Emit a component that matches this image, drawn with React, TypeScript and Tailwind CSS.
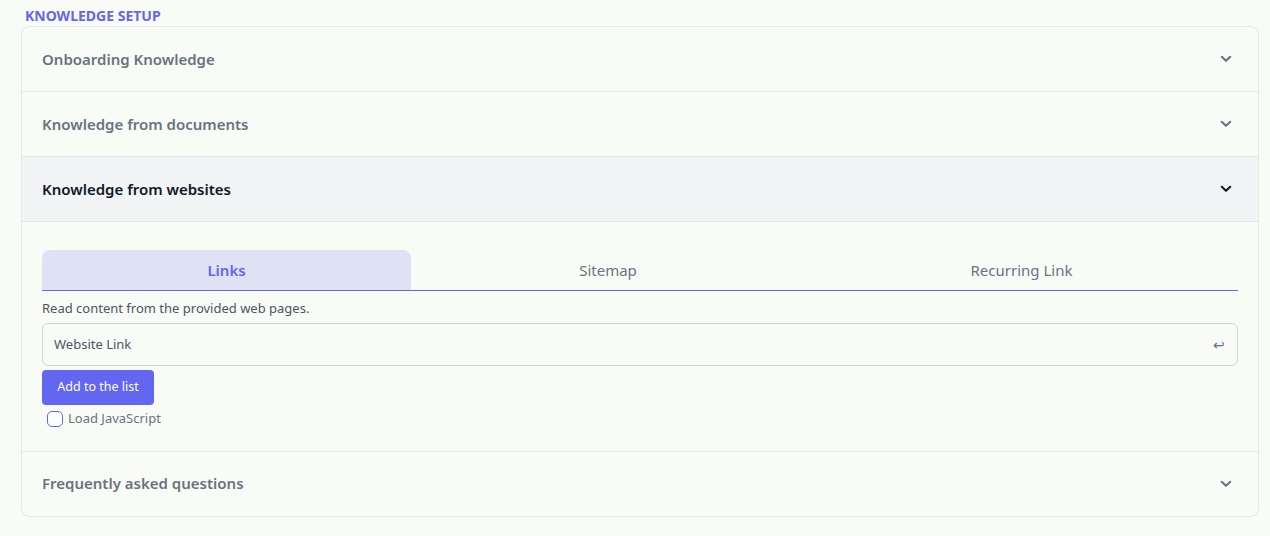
import React, { useState } from 'react';

const font = { fontFamily: '"Noto Sans", "Open Sans", sans-serif' };

const Chevron: React.FC<{ active?: boolean }> = ({ active }) => (
    <svg viewBox="0 0 20 20" className={`w-[18px] h-[18px] ${active ? 'text-gray-900' : 'text-gray-500'}`} fill="none" stroke="currentColor" strokeWidth={2.3} strokeLinecap="round" strokeLinejoin="round">
        <path d="M5.3 7.5 10 12l4.7-4.5" />
    </svg>
);

const SectionHeader: React.FC<{ title: string; open?: boolean; onClick: () => void }> = ({ title, open, onClick }) => (
    <button
        onClick={onClick}
        className={`w-full h-[64px] flex items-center justify-between pl-[20px] pr-[23px] text-left ${open ? 'bg-[#f3f4f6] text-gray-900' : 'text-gray-500'}`}
    >
        <span className="text-[15px] font-semibold">{title}</span>
        <Chevron active={open} />
    </button>
);

const WebsitesPanel: React.FC = () => {
    const [tab, setTab] = useState('links');
    const tabs = [
        { id: 'links', label: 'Links', w: 'w-[369px]' },
        { id: 'sitemap', label: 'Sitemap', w: 'w-[394px]' },
        { id: 'recurring', label: 'Recurring Link', w: 'flex-1' },
    ];

    return (
        <div className="px-[20px] pt-[28px] pb-[22px] border-t border-[#e5e7eb]">
            <div className="flex border-b border-[#6366f1]">
                {tabs.map(t => (
                    <button
                        key={t.id}
                        onClick={() => setTab(t.id)}
                        className={`${t.w} h-[40px] text-[15px] rounded-t-lg ${tab === t.id ? 'bg-[#dfe1f5] text-[#6366f1] font-semibold' : 'text-gray-500'}`}
                    >
                        {t.label}
                    </button>
                ))}
            </div>
            <p className="text-[13px] text-gray-600 mt-[8px] leading-[18px]">Read content from the provided web pages.</p>
            <div className="mt-[6px] h-[43px] flex items-center border border-[#d1d5db] rounded-md px-[11px]">
                <input
                    placeholder="Website Link"
                    className="flex-1 bg-transparent outline-none text-[13px] text-gray-700 placeholder:text-gray-600"
                    style={font}
                />
                <span className="text-[#64748b] text-[14px] pr-[1px]">↩</span>
            </div>
            <button className="mt-[4px] h-[35px] w-[112px] rounded bg-[#6366f1] text-white text-[12.5px]">Add to the list</button>
            <label className="flex items-center gap-[5px] mt-[4px] ml-[5px] text-[13px] text-gray-500">
                <input type="checkbox" className="appearance-none w-[16px] h-[16px] rounded-[5px] border border-[#6366f1] bg-white checked:bg-[#6366f1]" />
                Load JavaScript
            </label>
        </div>
    );
};

const App: React.FC = () => {
    const [open, setOpen] = useState<string | null>('websites');
    const toggle = (id: string) => setOpen(open === id ? null : id);

    return (
        <div className="min-h-screen bg-[#f9fcf6] px-[21px] pt-[7px]" style={font}>
            <h2 className="text-[14px] font-bold text-[#6366f1] uppercase ml-[4px] leading-[18px]">Knowledge Setup</h2>
            <div className="mt-[1px] w-[1238px] border border-[#e5e7eb] rounded-lg overflow-hidden">
                <SectionHeader title="Onboarding Knowledge" open={open === 'onboarding'} onClick={() => toggle('onboarding')} />
                <div className="border-t border-[#e5e7eb]">
                    <SectionHeader title="Knowledge from documents" open={open === 'documents'} onClick={() => toggle('documents')} />
                </div>
                <div className="border-t border-[#e5e7eb]">
                    <SectionHeader title="Knowledge from websites" open={open === 'websites'} onClick={() => toggle('websites')} />
                    {open === 'websites' && <WebsitesPanel />}
                </div>
                <div className="border-t border-[#e5e7eb]">
                    <SectionHeader title="Frequently asked questions" open={open === 'faq'} onClick={() => toggle('faq')} />
                </div>
            </div>
        </div>
    );
};

export default App;
